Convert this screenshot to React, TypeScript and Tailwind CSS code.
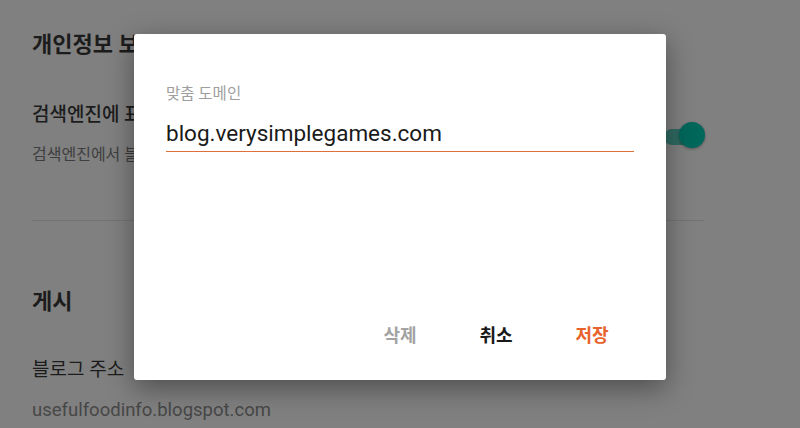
import React from "react";

const ko = { fontFamily: '"Roboto", "Noto Sans CJK KR", sans-serif' };

export default function App() {
  return (
    <div className="relative w-[800px] h-[428px] overflow-hidden bg-[#808080]" style={ko}>
      {/* page behind overlay */}
      <div className="pl-8 pr-24 pt-[30px]">
        <h2 className="text-[22px] leading-[30px] font-bold text-[#1c1c1c]">개인정보 보호</h2>
        <div className="mt-[40px] flex items-start justify-between w-[672px]">
          <div>
            <div className="text-[19px] leading-[30px] font-medium text-[#1c1c1c]">검색엔진에 표시</div>
            <div className="mt-[15px] text-[16px] leading-[20px] text-[#3e3e3e]">검색엔진에서 블로그를 찾을 수 있도록 허용</div>
          </div>
          <div className="relative w-[40px] h-[26px] mt-[22px]">
            <div className="absolute left-0 top-[7px] w-[34px] h-[16px] rounded-full bg-[#2f6a62]" />
            <div className="absolute right-[-1px] top-0 w-[26px] h-[26px] rounded-full bg-[#00675b] shadow-[0_1px_3px_rgba(0,0,0,0.35)]" />
          </div>
        </div>
        <div className="mt-[55px] h-px w-[672px] bg-[#747474]" />
        <h2 className="mt-[66px] text-[22px] leading-[30px] font-bold text-[#1c1c1c]">게시</h2>
        <div className="mt-[38px] text-[19px] leading-[30px] text-[#1c1c1c]">블로그 주소</div>
        <div className="mt-[15px] text-[18.5px] leading-[20px] text-[#474747]">usefulfoodinfo.blogspot.com</div>
      </div>

      {/* dialog */}
      <div className="absolute left-[134px] top-[34px] w-[532px] h-[346px] bg-white rounded-[3px] shadow-[0_8px_28px_rgba(0,0,0,0.4)] px-8 pt-[47px] flex flex-col">
        <label className="text-[15.5px] leading-[26px] text-[#9e9e9e]">맞춤 도메인</label>
        <div className="mt-[11px] text-[22.5px] leading-[30px] text-[#1a1a1a]">blog.verysimplegames.com</div>
        <div className="mt-[3px] h-px bg-[#e0703a]" />
        <div className="mt-auto mb-[27px] flex justify-end items-center mr-[2px]">
          <button className="w-[96px] h-[36px] text-[18px] font-bold text-[#a3a3a3]">삭제</button>
          <button className="w-[96px] h-[36px] text-[18px] font-bold text-[#1a1a1a]">취소</button>
          <button className="w-[96px] h-[36px] text-[18px] font-bold text-[#e8622c] mr-[-8px]">저장</button>
        </div>
      </div>
    </div>
  );
}
